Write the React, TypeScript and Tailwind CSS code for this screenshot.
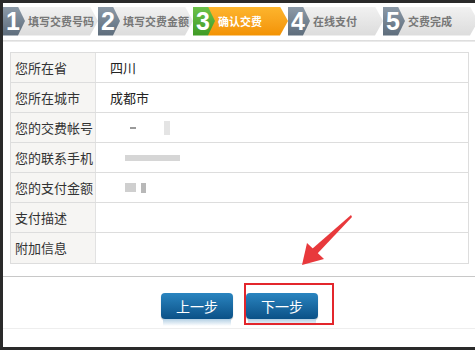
import React from 'react';

type Step = { num: string; label: string; active?: boolean };

const steps: Step[] = [
    { num: '1', label: '填写交费号码' },
    { num: '2', label: '填写交费金额' },
    { num: '3', label: '确认交费', active: true },
    { num: '4', label: '在线支付' },
    { num: '5', label: '交费完成' },
];

const rows: { label: string; value?: string; blur?: 'account' | 'phone' | 'amount' }[] = [
    { label: '您所在省', value: '四川' },
    { label: '您所在城市', value: '成都市' },
    { label: '您的交费帐号', blur: 'account' },
    { label: '您的联系手机', blur: 'phone' },
    { label: '您的支付金额', blur: 'amount' },
    { label: '支付描述' },
    { label: '附加信息' },
];

const StepItem: React.FC<{ step: Step }> = ({ step }) => (
    <div className="flex items-center h-[29px] w-[95px] flex-shrink-0">
        <div
            className={`relative z-10 h-full w-[22px] flex items-center justify-start pl-[3px] text-white text-[25px] leading-none font-bold [clip-path:polygon(0_0,68%_0,100%_50%,68%_100%,0_100%)] ${
                step.active ? 'bg-gradient-to-b from-[#6cc24a] to-[#3e9a24]' : 'bg-gradient-to-b from-[#8c9aa8] to-[#5d6c7b]'
            }`}
            style={{ fontFamily: '"Liberation Sans", Arial, sans-serif' }}
        >
            {step.num}
        </div>
        <div
            className={`-ml-[7px] h-full w-[80px] flex items-center pl-[10px] text-[11px] font-bold whitespace-nowrap [clip-path:polygon(0_0,90%_0,100%_50%,90%_100%,0_100%)] ${
                step.active ? 'bg-gradient-to-b from-[#fdb52c] to-[#f39200] text-white' : 'bg-gradient-to-b from-[#f1f1f1] to-[#dcdcdc] text-[#777]'
            }`}
        >
            {step.label}
        </div>
    </div>
);

const Blur: React.FC<{ kind: 'account' | 'phone' | 'amount' }> = ({ kind }) => {
    if (kind === 'account')
        return (
            <div className="flex items-center gap-[28px] pl-[20px]">
                <span className="w-[6px] h-[2px] bg-[#9a9a9a]" />
                <span className="w-[6px] h-[14px] bg-[#e4e4e4] blur-[0.5px]" />
            </div>
        );
    if (kind === 'phone') return <div className="ml-[15px] w-[55px] h-[6px] bg-[#d6d6d6] blur-[0.6px]" />;
    return (
        <div className="flex items-center gap-[5px] ml-[15px]">
            <span className="w-[11px] h-[9px] bg-[#cfcfcf] blur-[0.5px]" />
            <span className="w-[5px] h-[10px] bg-[#b8b8b8] blur-[0.5px]" />
        </div>
    );
};

export default function App() {
    return (
        <div
            className="w-[475px] h-[350px] bg-[#2a2a2a] pt-[3px] pl-[3px] pb-[3px] overflow-hidden"
            style={{ fontFamily: '"Noto Sans CJK SC", "Liberation Sans", sans-serif' }}
        >
            <div className="relative h-full bg-white flex flex-col">
                {/* steps */}
                <div className="flex items-center pt-[2px] h-[34px]">
                    {steps.map((s) => (
                        <StepItem key={s.num} step={s} />
                    ))}
                </div>
                <div className="mt-[3px] h-[2px] bg-gradient-to-b from-[#d8d8d8] to-[#f0f0f0]" />

                {/* detail table */}
                <div className="mt-[10px] ml-[7px] w-[459px] border border-[#dddddd]">
                    {rows.map((r, i) => (
                        <div key={r.label} className={`flex h-[30px] ${i < rows.length - 1 ? 'border-b border-[#dddddd]' : ''}`}>
                            <div className="w-[85px] bg-[#f6f5f3] border-r border-[#e2e2e2] flex items-center pl-[4px] text-[13px] text-[#333]">{r.label}</div>
                            <div className="flex-1 flex items-center pl-[14px] text-[13px] text-[#222]">
                                {r.value}
                                {r.blur && <Blur kind={r.blur} />}
                            </div>
                        </div>
                    ))}
                </div>

                <div className="mt-[12px] h-[1px] bg-[#c8c8c8]" />

                {/* buttons */}
                <div className="flex pl-[158px] gap-[13px] mt-[16px]">
                    {['上一步', '下一步'].map((t) => (
                        <div key={t} className="flex flex-col">
                            <div className="w-[72px] h-[26px] rounded-[4px] bg-gradient-to-b from-[#2a85c0] to-[#0b5187] flex items-center justify-center text-white text-[14px] shadow-[0_1px_1px_rgba(0,0,0,0.3)]">
                                {t}
                            </div>
                            <div className="mx-[2px] h-[7px] bg-gradient-to-b from-[#b4d0e4] to-white" />
                        </div>
                    ))}
                </div>
                <div className="mt-[2px] h-[1px] bg-[#eeeeee]" />

                {/* annotation: red box */}
                <div className="absolute left-[241px] top-[280px] w-[90px] h-[42px] border-2 border-[#e3262c]" />

                {/* annotation: red arrow */}
                <svg className="absolute left-[290px] top-[205px]" width="70" height="65" viewBox="0 0 70 65">
                    <polygon points="58,7 59,9 24,46 19,41" fill="#e8393c" />
                    <polygon points="9,57 14,35 31,51" fill="#e8393c" />
                </svg>
            </div>
        </div>
    );
}
